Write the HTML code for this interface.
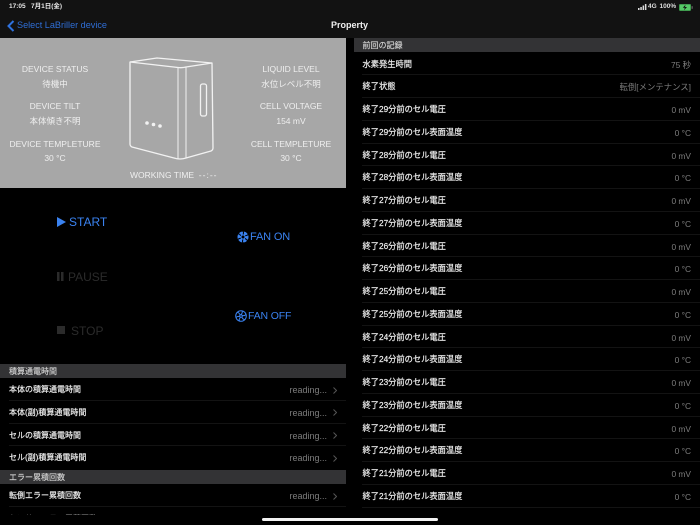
<!DOCTYPE html>
<html lang="ja">
<head>
<meta charset="utf-8">
<style>
html,body{margin:0;padding:0;background:#000;}
body{width:700px;height:525px;position:relative;overflow:hidden;font-family:"Liberation Sans","Noto Sans CJK JP",sans-serif;color:#fff;}
.a{position:absolute;white-space:nowrap;}
.hdr{position:absolute;left:0;top:0;width:700px;height:38px;background:#121212;}
.panel{position:absolute;left:0;top:38px;width:346px;height:150px;background:#a7a7a7;}
.c{position:absolute;text-align:center;color:#efefef;font-size:8.5px;line-height:12px;white-space:nowrap;transform:translateX(-50%);}
.sec{position:absolute;height:14px;background:#333335;color:#d2d2d2;font-size:8px;line-height:16px;-webkit-text-stroke:.15px #d2d2d2;}
.row{position:absolute;height:22.75px;font-size:8px;}
.row .l{position:absolute;left:0;top:0;line-height:24px;color:#ececec;-webkit-text-stroke:.2px #ececec;white-space:nowrap;}
.row .v{position:absolute;top:0;line-height:24px;color:#7d7d7d;white-space:nowrap;}
.row .ln{position:absolute;left:0;right:0;bottom:0;height:1px;background:#131313;}
.r{left:354px;width:346px;font-size:8.25px;}
.r .l{left:8.5px;}
.r .v{right:9px;font-size:8.4px;}
.r .ln{left:8px;}
.lf{left:0;width:346px;}
.lf .l{left:9px;}
.lf .v{right:19px;font-size:9px;}
.lf .ln{left:9px;}
.chev{position:absolute;right:9px;top:8.5px;}
.btn{position:absolute;font-size:12px;line-height:14px;white-space:nowrap;}
.fan{font-size:11px;letter-spacing:-.15px;}
.blue{color:#3a82f0;}
.dim{color:#2b2b2b;}
</style>
</head>
<body>
<div class="hdr"></div>
<div class="a" style="left:9px;top:2px;font-size:6.5px;line-height:10px;color:#e8e8e8;font-weight:bold;">17:05&nbsp;&nbsp;&nbsp;7月1日(金)</div>
<svg class="a" style="left:6px;top:20px" width="9" height="12" viewBox="0 0 9 12"><path d="M7.500 1 L2.500 6 L7.500 11" fill="none" stroke="#2f72de" stroke-width="2"/></svg>
<div class="a" style="left:17px;top:19px;font-size:9.100px;line-height:13px;color:#2f6ed6;">Select LaBriller device</div>
<div class="a" style="left:331px;top:19px;font-size:9px;line-height:13px;font-weight:bold;color:#f0f0f0;">Property</div>
<svg class="a" style="left:638px;top:4px" width="10" height="6" viewBox="0 0 10 6"><rect x="0" y="4" width="1.500" height="2" fill="#ddd"/><rect x="2.300" y="3" width="1.500" height="3" fill="#ddd"/><rect x="4.600" y="1.500" width="1.500" height="4.500" fill="#ddd"/><rect x="6.900" y="0" width="1.500" height="6" fill="#ddd"/></svg>
<div class="a" style="left:648px;top:2px;font-size:6.500px;line-height:10px;color:#dcdcdc;font-weight:bold;">4G</div>
<div class="a" style="left:659.500px;top:2px;font-size:6.500px;line-height:10px;color:#dcdcdc;font-weight:bold;">100%</div>
<svg class="a" style="left:679px;top:3.500px" width="14" height="7" viewBox="0 0 14 7"><rect x="0" y="0" width="12" height="7" rx="1.200" fill="#3f9c4e"/><rect x="1" y="1" width="10" height="5" fill="#55c966"/><path d="M6.500 0.800 L3.800 3.800 H5.800 L5 6.200 L8 3 H6 Z" fill="#111"/><rect x="12.600" y="2.200" width="1" height="2.600" fill="#777"/></svg>

<div class="panel"></div>
<div class="c" style="left:55px;top:63px;">DEVICE STATUS</div>
<div class="c" style="left:55px;top:78px;">待機中</div>
<div class="c" style="left:55px;top:100px;">DEVICE TILT</div>
<div class="c" style="left:55px;top:115px;">本体傾き不明</div>
<div class="c" style="left:55px;top:138px;">DEVICE TEMPLETURE</div>
<div class="c" style="left:55px;top:152px;">30 °C</div>
<div class="c" style="left:291px;top:63px;">LIQUID LEVEL</div>
<div class="c" style="left:291px;top:78px;">水位レベル不明</div>
<div class="c" style="left:291px;top:100px;">CELL VOLTAGE</div>
<div class="c" style="left:291px;top:115px;">154 mV</div>
<div class="c" style="left:291px;top:138px;">CELL TEMPLETURE</div>
<div class="c" style="left:291px;top:152px;">30 °C</div>
<div class="a" style="left:130px;top:169px;font-size:8.500px;line-height:12px;color:#efefef;">WORKING TIME&nbsp;&nbsp;<span style="letter-spacing:1px">--:--</span></div>
<svg class="a" style="left:120px;top:50px" width="100" height="115" viewBox="0 0 100 115" fill="none" stroke="#f2f2f2" stroke-width="1.300" stroke-linejoin="round">
<path d="M10 12 L37 8 L92 13 L93 98 Q93 100 91 101 L66 108 Q60 110 54 108 L12 97 Q10 96 10 94 Z"/>
<path d="M10 12 L58 17.500 Q62 18 66 17 L92 13"/>
<path d="M58 17.500 L58 109 M66 17 L66 108.500" stroke-width="1"/>
<rect x="80.500" y="34" width="6" height="32" rx="2"/>
<circle cx="27" cy="73" r="1.800" fill="#f2f2f2" stroke="none"/><circle cx="33.500" cy="74.500" r="1.800" fill="#f2f2f2" stroke="none"/><circle cx="40" cy="76" r="1.800" fill="#f2f2f2" stroke="none"/>
</svg>

<svg class="a" style="left:57px;top:217px" width="9" height="10" viewBox="0 0 9 10"><path d="M0 0 L9 5 L0 10 Z" fill="#3a82f0"/></svg>
<div class="btn blue" style="left:69px;top:215px;">START</div>
<svg class="a" style="left:57px;top:272px" width="7" height="9" viewBox="0 0 7 9"><rect x="0" y="0" width="2.500" height="9" fill="#2b2b2b"/><rect x="4" y="0" width="2.500" height="9" fill="#2b2b2b"/></svg>
<div class="btn dim" style="left:68px;top:269.500px;">PAUSE</div>
<div class="a" style="left:57px;top:326px;width:8px;height:8px;background:#2b2b2b;"></div>
<div class="btn dim" style="left:71px;top:323.500px;">STOP</div>

<svg class="a" style="left:237px;top:231px" width="12" height="12" viewBox="0 0 12 12"><circle cx="6" cy="6" r="5.500" fill="#3a82f0"/><g stroke="#000" stroke-width="1" fill="none"><path d="M6 3.500 Q7 1.500 6 0.300"/><path d="M8.200 4.800 Q10.400 4.600 11.200 3.400"/><path d="M8.200 7.300 Q9.500 9.200 11 9.200"/><path d="M6 8.500 Q5 10.500 6 11.700"/><path d="M3.800 7.200 Q1.600 7.400 0.800 8.600"/><path d="M3.800 4.700 Q2.500 2.800 1 2.800"/></g><circle cx="6" cy="6" r="1.500" fill="#000"/></svg>
<div class="btn blue fan" style="left:250px;top:230px;">FAN ON</div>
<svg class="a" style="left:235px;top:310px" width="12" height="12" viewBox="0 0 12 12" fill="none" stroke="#3a82f0" stroke-width="1"><circle cx="6" cy="6" r="5.300"/><circle cx="6" cy="6" r="1.300"/><path d="M6 4.700 Q8 2.500 7 0.800M7.200 5.500 Q10 6 11 4.200M6.800 7 Q8 9.800 10 9.500M5.500 7.200 Q3.500 9.500 4.500 11.200M4.800 6.500 Q2 6 1 7.800M5.200 5 Q4 2.200 2 2.500"/></svg>
<div class="btn blue fan" style="left:248px;top:309px;font-size:10.500px;">FAN OFF</div>

<div class="sec" style="left:0;top:364px;width:346px;"><span style="margin-left:9px">積算通電時間</span></div>
<div class="row lf" style="top:378px"><div class="l">本体の積算通電時間</div><div class="v">reading...</div><svg class="chev" width="4" height="7" viewBox="0 0 4 7"><path d="M0.500 0.500 L3.500 3.500 L0.500 6.500" fill="none" stroke="#555"/></svg><div class="ln"></div></div>
<div class="row lf" style="top:400.750px"><div class="l">本体(副)積算通電時間</div><div class="v">reading...</div><svg class="chev" width="4" height="7" viewBox="0 0 4 7"><path d="M0.500 0.500 L3.500 3.500 L0.500 6.500" fill="none" stroke="#555"/></svg><div class="ln"></div></div>
<div class="row lf" style="top:423.500px"><div class="l">セルの積算通電時間</div><div class="v">reading...</div><svg class="chev" width="4" height="7" viewBox="0 0 4 7"><path d="M0.500 0.500 L3.500 3.500 L0.500 6.500" fill="none" stroke="#555"/></svg><div class="ln"></div></div>
<div class="row lf" style="top:446.250px"><div class="l">セル(副)積算通電時間</div><div class="v">reading...</div><svg class="chev" width="4" height="7" viewBox="0 0 4 7"><path d="M0.500 0.500 L3.500 3.500 L0.500 6.500" fill="none" stroke="#555"/></svg></div>
<div class="sec" style="left:0;top:470px;width:346px;"><span style="margin-left:9px">エラー累積回数</span></div>
<div class="row lf" style="top:484px"><div class="l">転倒エラー累積回数</div><div class="v">reading...</div><svg class="chev" width="4" height="7" viewBox="0 0 4 7"><path d="M0.500 0.500 L3.500 3.500 L0.500 6.500" fill="none" stroke="#555"/></svg><div class="ln"></div></div>
<div class="row lf" style="top:506.750px;height:8.250px;overflow:hidden;opacity:.5"><div class="l">センサーエラー累積回数</div></div>

<div class="sec" style="left:354px;top:38px;width:346px;"><span style="margin-left:8.500px">前回の記録</span></div>
<div class="row r" style="top:52.500px"><div class="l">水素発生時間</div><div class="v">75 秒</div><div class="ln"></div></div>
<div class="row r" style="top:75.250px"><div class="l">終了状態</div><div class="v">転倒[メンテナンス]</div><div class="ln"></div></div>
<div class="row r" style="top:98px"><div class="l">終了29分前のセル電圧</div><div class="v">0 mV</div><div class="ln"></div></div>
<div class="row r" style="top:120.750px"><div class="l">終了29分前のセル表面温度</div><div class="v">0 °C</div><div class="ln"></div></div>
<div class="row r" style="top:143.500px"><div class="l">終了28分前のセル電圧</div><div class="v">0 mV</div><div class="ln"></div></div>
<div class="row r" style="top:166.250px"><div class="l">終了28分前のセル表面温度</div><div class="v">0 °C</div><div class="ln"></div></div>
<div class="row r" style="top:189px"><div class="l">終了27分前のセル電圧</div><div class="v">0 mV</div><div class="ln"></div></div>
<div class="row r" style="top:211.750px"><div class="l">終了27分前のセル表面温度</div><div class="v">0 °C</div><div class="ln"></div></div>
<div class="row r" style="top:234.500px"><div class="l">終了26分前のセル電圧</div><div class="v">0 mV</div><div class="ln"></div></div>
<div class="row r" style="top:257.250px"><div class="l">終了26分前のセル表面温度</div><div class="v">0 °C</div><div class="ln"></div></div>
<div class="row r" style="top:280px"><div class="l">終了25分前のセル電圧</div><div class="v">0 mV</div><div class="ln"></div></div>
<div class="row r" style="top:302.750px"><div class="l">終了25分前のセル表面温度</div><div class="v">0 °C</div><div class="ln"></div></div>
<div class="row r" style="top:325.500px"><div class="l">終了24分前のセル電圧</div><div class="v">0 mV</div><div class="ln"></div></div>
<div class="row r" style="top:348.250px"><div class="l">終了24分前のセル表面温度</div><div class="v">0 °C</div><div class="ln"></div></div>
<div class="row r" style="top:371px"><div class="l">終了23分前のセル電圧</div><div class="v">0 mV</div><div class="ln"></div></div>
<div class="row r" style="top:393.750px"><div class="l">終了23分前のセル表面温度</div><div class="v">0 °C</div><div class="ln"></div></div>
<div class="row r" style="top:416.500px"><div class="l">終了22分前のセル電圧</div><div class="v">0 mV</div><div class="ln"></div></div>
<div class="row r" style="top:439.250px"><div class="l">終了22分前のセル表面温度</div><div class="v">0 °C</div><div class="ln"></div></div>
<div class="row r" style="top:462px"><div class="l">終了21分前のセル電圧</div><div class="v">0 mV</div><div class="ln"></div></div>
<div class="row r" style="top:484.750px"><div class="l">終了21分前のセル表面温度</div><div class="v">0 °C</div><div class="ln"></div></div>

<div class="a" style="left:262px;top:518px;width:176px;height:3px;border-radius:2px;background:#f2f2f2;"></div>
</body>
</html>
